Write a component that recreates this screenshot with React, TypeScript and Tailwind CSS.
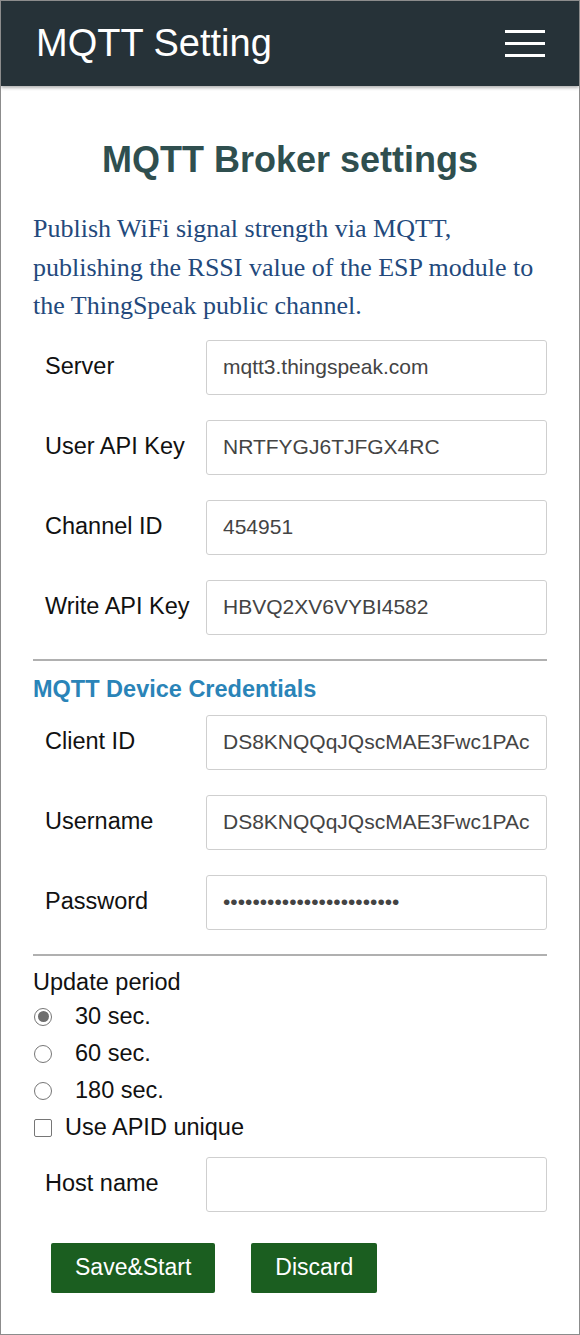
import { useState } from "react";

const BROKER = [
  { label: "Server", value: "mqtt3.thingspeak.com" },
  { label: "User API Key", value: "NRTFYGJ6TJFGX4RC" },
  { label: "Channel ID", value: "454951" },
  { label: "Write API Key", value: "HBVQ2XV6VYBI4582" },
];

const DEVICE = [
  { label: "Client ID", value: "DS8KNQQqJQscMAE3Fwc1PAc", type: "text" },
  { label: "Username", value: "DS8KNQQqJQscMAE3Fwc1PAc", type: "text" },
  { label: "Password", value: "abcdefghijklmnopqrstuvwx", type: "password" },
];

const PERIODS = ["30 sec.", "60 sec.", "180 sec."];

function Field({ label, value, type = "text" }: { label: string; value: string; type?: string }) {
  return (
    <div className="flex items-center">
      <label className="w-[173px] shrink-0 pl-3 text-[23.5px] text-[#111]">{label}</label>
      <input
        type={type}
        defaultValue={value}
        className="h-[55px] w-[341px] rounded-[3px] border border-[#cfcfcf] px-4 text-[21px] text-[#444] outline-none"
      />
    </div>
  );
}

export default function App() {
  const [period, setPeriod] = useState(0);
  const [unique, setUnique] = useState(false);

  return (
    <div
      className="h-[1335px] w-[580px] overflow-hidden border border-[#8c8c8c] bg-white"
      style={{ fontFamily: '"Liberation Sans", Arial, sans-serif' }}
    >
      <header className="flex h-[85px] items-center justify-between bg-[#263238] pl-[35px] pr-[34px] shadow-[0_2px_3px_rgba(0,0,0,0.3)]">
        <h1 className="text-[38px] text-white">MQTT Setting</h1>
        <button className="flex w-[40px] flex-col gap-[9px]" aria-label="menu">
          <span className="h-[3px] w-full bg-white" />
          <span className="h-[3px] w-full bg-white" />
          <span className="h-[3px] w-full bg-white" />
        </button>
      </header>

      <main className="px-[32px]">
        <h2 className="mt-[54px] text-center text-[36px] font-bold leading-[40px] text-[#2f4f4f]">
          MQTT Broker settings
        </h2>
        <p
          className="mt-[30px] text-[26px] leading-[38.5px] text-[#23497c]"
          style={{ fontFamily: '"Liberation Serif", "Times New Roman", serif' }}
        >
          Publish WiFi signal strength via MQTT,
          <br />
          publishing the RSSI value of the ESP module to
          <br />
          the ThingSpeak public channel.
        </p>

        <div className="mt-[14px] flex flex-col gap-[25px]">
          {BROKER.map((f) => (
            <Field key={f.label} {...f} />
          ))}
        </div>

        <hr className="mt-[24px] border-t-2 border-[#b0b0b0]" />

        <h3 className="mt-[14px] text-[23.5px] font-bold leading-[28px] text-[#2a84b8]">MQTT Device Credentials</h3>

        <div className="mt-[12px] flex flex-col gap-[25px]">
          {DEVICE.map((f) => (
            <Field key={f.label} {...f} />
          ))}
        </div>

        <hr className="mt-[24px] border-t-2 border-[#b0b0b0]" />

        <div className="mt-[12px] text-[23.5px] leading-[28px] text-[#111]">Update period</div>

        <div className="mt-[7px] flex flex-col gap-[9px]">
          {PERIODS.map((p, i) => (
            <label key={p} className="flex h-[28px] items-center text-[23.5px] text-[#111]" onClick={() => setPeriod(i)}>
              <span className="ml-[1px] flex h-[18px] w-[18px] items-center justify-center rounded-full border border-[#767676] bg-white">
                {period === i && <span className="h-[11px] w-[11px] rounded-full bg-[#6e6e6e]" />}
              </span>
              <span className="ml-[23px]">{p}</span>
            </label>
          ))}
          <label className="flex h-[28px] items-center text-[23.5px] text-[#111]" onClick={() => setUnique(!unique)}>
            <span className="ml-[1px] flex h-[18px] w-[18px] items-center justify-center rounded-[2px] border border-[#767676] bg-white">
              {unique && <span className="text-[13px] leading-none">✓</span>}
            </span>
            <span className="ml-[13px]">Use APID unique</span>
          </label>
        </div>

        <div className="mt-[15px]">
          <Field label="Host name" value="" />
        </div>

        <div className="mt-[31px] flex gap-[36px] pl-[18px]">
          <button className="h-[50px] rounded-[2px] bg-[#1b5e20] px-[24px] text-[23px] text-white">Save&amp;Start</button>
          <button className="h-[50px] rounded-[2px] bg-[#1b5e20] px-[24px] text-[23px] text-white">Discard</button>
        </div>
      </main>
    </div>
  );
}
